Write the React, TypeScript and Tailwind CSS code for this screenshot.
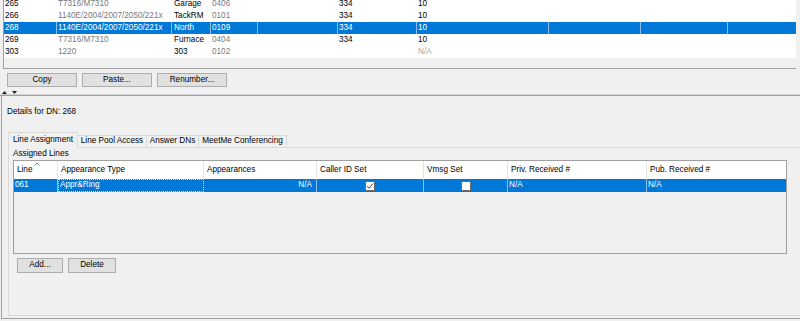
import React from 'react'

type TopRow = {
  dn: string
  set: string
  name: string
  port: string
  a: string
  b: string
  bGray?: boolean
  selected?: boolean
}

const topRows: TopRow[] = [
  { dn: '265', set: 'T7316/M7310', name: 'Garage', port: '0406', a: '334', b: '10' },
  { dn: '266', set: '1140E/2004/2007/2050/221x', name: 'TackRM', port: '0101', a: '334', b: '10' },
  { dn: '268', set: '1140E/2004/2007/2050/221x', name: 'North', port: '0109', a: '334', b: '10', selected: true },
  { dn: '269', set: 'T7316/M7310', name: 'Furnace', port: '0404', a: '334', b: '10' },
  { dn: '303', set: '1220', name: '303', port: '0102', a: '', b: 'N/A', bGray: true },
]

// widths of the top list columns, left to right
const topCols = ['w-[53px]', 'w-[115px]', 'w-[39px]', 'w-[47px]', 'w-[80px]', 'w-[79px]', 'w-[132px]', 'w-[92px]', 'w-[87px]', 'w-[68px]']

function Btn({ label, w }: { label: string; w: string }) {
  return (
    <div className={`${w} h-full flex items-center justify-center bg-[#e1e1e1] border border-[#adadad] text-black`}>
      {label}
    </div>
  )
}

function TopList() {
  return (
    <div className="ml-[3px] w-[793px] h-[69px] border-l border-b border-[#a0a0a0] overflow-hidden">
      <div className="bg-white -mt-[2px]">
        {topRows.map((r) => {
          const sel = r.selected
          const cell = (i: number, extra = '') =>
            `${topCols[i]} shrink-0 h-full flex items-center whitespace-nowrap overflow-hidden ${extra} ${
              sel ? 'border-r border-[#8dbcea]' : ''
            }`
          return (
            <div key={r.dn} className={`flex h-[12px] ${sel ? 'bg-[#0078d7] text-white' : ''}`}>
              <div className={cell(0, 'pl-[1px]')}>{r.dn}</div>
              <div className={cell(1, `pl-[1px] ${sel ? '' : 'text-[#7a7a7a]'}`)}>{r.set}</div>
              <div className={cell(2, 'pl-[2px]')}>{r.name}</div>
              <div className={cell(3, `pl-[1px] ${sel ? '' : 'text-[#7a7a7a]'}`)}>{r.port}</div>
              <div className={cell(4)} />
              <div className={cell(5, 'pl-[1px]')}>{r.a}</div>
              <div className={cell(6, `pl-[1px] ${r.bGray ? 'text-[#a5a5a5]' : ''}`)}>{r.b}</div>
              <div className={cell(7)} />
              <div className={cell(8)} />
              <div className={`${topCols[9]} shrink-0 h-full`} />
            </div>
          )
        })}
      </div>
    </div>
  )
}

function Checkbox({ checked }: { checked?: boolean }) {
  return (
    <div className="w-[10px] h-[10px] bg-white border border-[#6b6b6b] flex items-center justify-center">
      {checked && (
        <svg width="8" height="8" viewBox="0 0 8 8">
          <path d="M1 4.2 L3 6.2 L7 1.5" fill="none" stroke="#333" strokeWidth="1" />
        </svg>
      )}
    </div>
  )
}

const lineCols = [
  { title: 'Line', w: 'w-[44px]' },
  { title: 'Appearance Type', w: 'w-[146px]' },
  { title: 'Appearances', w: 'w-[113px]' },
  { title: 'Caller ID Set', w: 'w-[107px]' },
  { title: 'Vmsg Set', w: 'w-[84px]' },
  { title: 'Priv. Received #', w: 'w-[139px]' },
  { title: 'Pub. Received #', w: 'w-[139px]' },
]

function LinesTable() {
  return (
    <div className="ml-[4px] w-[774px] h-[94px] border border-[#a0a0a0] bg-[#f0f0f0]">
      {/* header */}
      <div className="flex h-[18px] bg-white">
        {lineCols.map((c, i) => (
          <div
            key={c.title}
            className={`${c.w} shrink-0 h-full flex items-center pl-[3px] relative ${
              i < lineCols.length - 1 ? 'border-r border-[#e5e5e5]' : ''
            }`}
          >
            {i === 0 && (
              <svg className="absolute left-[20px] top-[1px]" width="6" height="4" viewBox="0 0 6 4">
                <path d="M0.5 3.5 L3 1 L5.5 3.5" fill="none" stroke="#8a8a8a" strokeWidth="1" />
              </svg>
            )}
            <span className="pt-[1px]">{c.title}</span>
          </div>
        ))}
      </div>
      {/* selected row */}
      <div className="flex h-[13px] bg-[#0078d7] text-white">
        <div className="w-[44px] shrink-0 h-full flex items-center pl-[1px] border-r border-[#8dbcea]">061</div>
        <div className="w-[146px] shrink-0 h-full flex items-center pl-[1px] border border-dotted border-[#f3d9b0]">
          Appr&amp;Ring
        </div>
        <div className="w-[113px] shrink-0 h-full flex items-center justify-end pr-[4px] border-r border-[#8dbcea]">
          N/A
        </div>
        <div className="w-[107px] shrink-0 h-full flex items-center justify-center border-r border-[#8dbcea]">
          <Checkbox checked />
        </div>
        <div className="w-[84px] shrink-0 h-full flex items-center justify-center border-r border-[#8dbcea]">
          <Checkbox />
        </div>
        <div className="w-[139px] shrink-0 h-full flex items-center pl-[1px] border-r border-[#8dbcea]">N/A</div>
        <div className="w-[137px] shrink-0 h-full flex items-center pl-[1px]">N/A</div>
      </div>
    </div>
  )
}

function Tabs() {
  const tabs = ['Line Assignment', 'Line Pool Access', 'Answer DNs', 'MeetMe Conferencing']
  return (
    <div className="ml-[6px] flex items-end h-[15px]">
      {tabs.map((t, i) =>
        i === 0 ? (
          <div
            key={t}
            className="relative z-10 -mb-px h-[16px] w-[70px] flex items-center justify-center bg-[#f0f0f0] border border-b-0 border-[#d9d9d9]"
          >
            {t}
          </div>
        ) : (
          <div
            key={t}
            className={`h-[12px] flex items-center justify-center bg-[#f0f0f0] border-t border-r border-[#d9d9d9] ${
              i === 1 ? 'w-[69px]' : i === 2 ? 'w-[52px]' : 'w-[88px]'
            }`}
          >
            {t}
          </div>
        )
      )}
    </div>
  )
}

export default function App() {
  return (
    <div
      className="w-[800px] h-[321px] bg-[#f0f0f0] overflow-hidden text-[8.2px] leading-none text-black"
      style={{ fontFamily: '"Liberation Sans", Arial, sans-serif' }}
    >
      <TopList />

      {/* list actions */}
      <div className="mt-[4px] ml-[7px] h-[14px] flex gap-[5px]">
        <Btn label="Copy" w="w-[70px]" />
        <Btn label="Paste..." w="w-[70px]" />
        <Btn label="Renumber..." w="w-[70px]" />
      </div>

      {/* splitter */}
      <div className="h-[7px] flex items-end gap-[5px] pl-[2px]">
        <svg width="5" height="3" viewBox="0 0 5 3">
          <path d="M0 3 L2.5 0 L5 3 Z" fill="#222" />
        </svg>
        <svg width="5" height="3" viewBox="0 0 5 3">
          <path d="M0 0 L2.5 3 L5 0 Z" fill="#222" />
        </svg>
      </div>
      <div className="h-px bg-[#d4d4d4]" />
      <div className="h-px bg-[#a0a0a0]" />

      {/* details panel */}
      <div className="ml-[1px] h-[223px] border-l border-b border-[#a0a0a0] overflow-hidden">
        <div className="pt-[11px] pl-[5px] h-[36px] leading-[10px]">Details for DN: 268</div>
        <Tabs />
        <div className="ml-[6px] w-[800px] h-[169px] border-l border-t border-b border-[#d9d9d9]">
          <div className="h-[12px] flex items-center pl-[4px] pt-[1px]">Assigned Lines</div>
          <LinesTable />
          <div className="mt-[4px] ml-[8px] h-[15px] flex gap-[5px]">
            <Btn label="Add..." w="w-[46px]" />
            <Btn label="Delete" w="w-[48px]" />
          </div>
        </div>
      </div>
    </div>
  )
}
